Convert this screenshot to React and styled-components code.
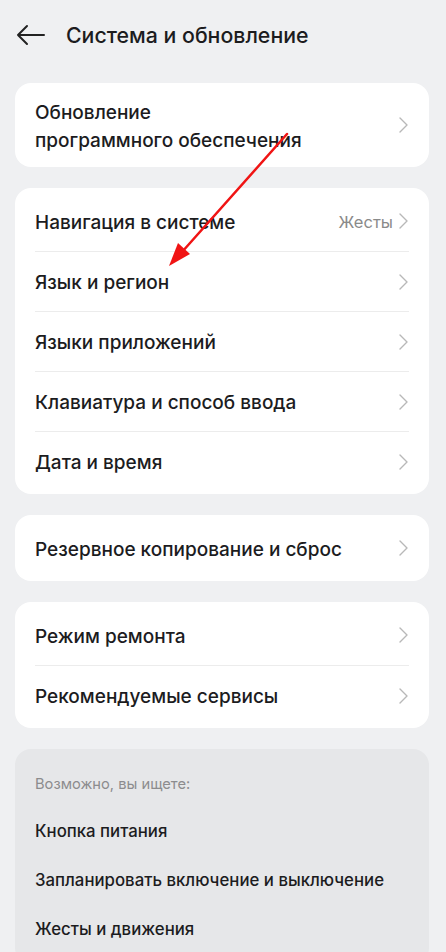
import styled, { createGlobalStyle } from "styled-components";

const GlobalStyle = createGlobalStyle`
  body {
    margin: 0;
    background: #eff0f2;
    font-family: Inter, Roboto, sans-serif;
    color: #1c1c1e;
  }
`;

const Page = styled.div`
  position: relative;
  width: 446px;
  min-height: 952px;
  overflow: hidden;
  background: #eff0f2;
`;

const Header = styled.header`
  display: flex;
  align-items: center;
  height: 70px;
  padding-left: 16px;
`;

const BackButton = styled.button`
  display: flex;
  align-items: center;
  justify-content: center;
  width: 30px;
  height: 30px;
  padding: 0;
  margin-right: 20px;
  border: none;
  background: none;
`;

const Title = styled.h1`
  margin: 0;
  font-size: 21.3px;
  font-weight: 500;
  color: #1c1c1e;
`;

const Content = styled.main`
  display: flex;
  flex-direction: column;
  gap: 21px;
  padding: 13px 17px 0 15px;
`;

const Card = styled.section`
  background: ${(p) => (p.$muted ? "#e6e7e9" : "#ffffff")};
  border-radius: 16px;
  padding: ${(p) => (p.$muted ? "26px 20px 10px" : "3px 20px")};
`;

const Row = styled.div`
  box-sizing: border-box;
  display: flex;
  align-items: center;
  min-height: ${(p) => (p.$tall ? "78px" : "60px")};
  & + & {
    border-top: 1px solid #ececec;
  }
`;

const Label = styled.div`
  flex: 1;
  padding-top: 3px;
  font-size: 19px;
  font-weight: 450;
  line-height: 28px;
  color: #1c1c1e;
`;

const Value = styled.span`
  padding-top: 2px;
  font-size: 16.5px;
  color: #8a8a8a;
  margin-right: 4px;
`;

const Hint = styled.div`
  font-size: 14.7px;
  color: #8c8c8e;
  margin-bottom: 14px;
`;

const Suggestion = styled.div`
  font-size: 16.8px;
  font-weight: 450;
  line-height: 49px;
  color: #1c1c1e;
`;

const Pointer = styled.svg`
  position: absolute;
  left: 0;
  top: 0;
  pointer-events: none;
`;

function Chevron() {
  return (
    <svg width="12" height="18" viewBox="0 0 12 18">
      <path d="M3 2 L10 9 L3 16" fill="none" stroke="#b8b8b8" strokeWidth="1.4" strokeLinecap="round" strokeLinejoin="round" />
    </svg>
  );
}

function BackIcon() {
  return (
    <svg width="30" height="30" viewBox="0 0 30 30">
      <path d="M2 15 H28 M2 15 L11 6 M2 15 L11 24" fill="none" stroke="#222" strokeWidth="2" strokeLinecap="round" strokeLinejoin="round" />
    </svg>
  );
}

function SettingRow({ label, value, tall }) {
  return (
    <Row $tall={tall}>
      <Label>{label}</Label>
      {value && <Value>{value}</Value>}
      <Chevron />
    </Row>
  );
}

const groups = [
  [{ label: ["Обновление", <br key="br" />, "программного обеспечения"], tall: true }],
  [
    { label: "Навигация в системе", value: "Жесты" },
    { label: "Язык и регион" },
    { label: "Языки приложений" },
    { label: "Клавиатура и способ ввода" },
    { label: "Дата и время" },
  ],
  [{ label: "Резервное копирование и сброс" }],
  [{ label: "Режим ремонта" }, { label: "Рекомендуемые сервисы" }],
];

const suggestions = ["Кнопка питания", "Запланировать включение и выключение", "Жесты и движения"];

export default function App() {
  return (
    <Page>
      <GlobalStyle />
      <Header>
        <BackButton>
          <BackIcon />
        </BackButton>
        <Title>Система и обновление</Title>
      </Header>
      <Content>
        {groups.map((items, i) => (
          <Card key={i}>
            {items.map((item, j) => (
              <SettingRow key={j} {...item} />
            ))}
          </Card>
        ))}
        <Card $muted>
          <Hint>Возможно, вы ищете:</Hint>
          {suggestions.map((s) => (
            <Suggestion key={s}>{s}</Suggestion>
          ))}
        </Card>
      </Content>
      <Pointer width="446" height="952">
        <line x1="287" y1="134" x2="182" y2="252" stroke="#f01414" strokeWidth="2.5" strokeLinecap="round" />
        <polygon points="169,266 178,243 190,254" fill="#f01414" />
      </Pointer>
    </Page>
  );
}
